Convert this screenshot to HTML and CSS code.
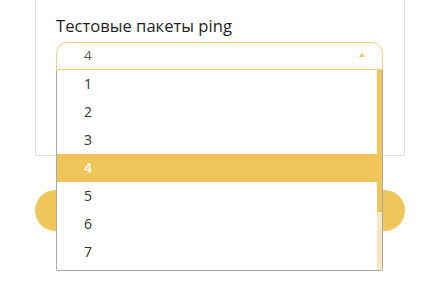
FILE: index.html
```html
<!DOCTYPE html>
<html lang="ru">
<head>
<meta charset="utf-8">
<title>Тестовые пакеты ping</title>
<link rel="stylesheet" href="styles.css">
</head>
<body>
<div class="page">
  <div class="card">
    <div class="label">Тестовые пакеты ping</div>
    <div class="select">
      <div class="select-head">
        <span class="value">4</span>
        <span class="arrow"></span>
      </div>
      <div class="options">
        <ul class="list">
          <li>1</li>
          <li>2</li>
          <li>3</li>
          <li class="active">4</li>
          <li>5</li>
          <li>6</li>
          <li>7</li>
        </ul>
        <div class="scrollbar">
          <div class="thumb"></div>
          <div class="track"></div>
        </div>
      </div>
    </div>
  </div>
  <div class="btn"></div>
</div>
</body>
</html>
```
FILE: styles.css
```css
html, body {
  margin: 0;
  padding: 0;
  background: #fff;
  min-height: 296px;
}
body {
  font-family: "Open Sans", "Noto Sans", sans-serif;
  color: #222;
}
.page {
  padding-left: 35px;
  min-height: 296px;
}
.card {
  border: 1px solid #dedede;
  border-top: none;
  padding: 15px 0 85px 20px;
  box-sizing: border-box;
  width: 370px;
}
.label {
  font-size: 16.6px;
  line-height: 22px;
  color: #1e1e1e;
  margin-bottom: 5px;
}
.select {
  position: relative;
  width: 327px;
}
.select-head {
  height: 28px;
  box-sizing: border-box;
  border: 1px solid #efd27c;
  border-radius: 11px 11px 0 0;
  display: flex;
  align-items: center;
  justify-content: space-between;
  padding: 0 17px 0 27px;
}
.value {
  font-size: 13.5px;
  color: #555;
  line-height: 1;
}
.arrow {
  width: 0;
  height: 0;
  border-left: 3.5px solid transparent;
  border-right: 3.5px solid transparent;
  border-bottom: 4px solid #ecc45c;
  margin-top: -2px;
}
.options {
  position: absolute;
  top: 28px;
  left: 0;
  width: 327px;
  height: 201px;
  box-sizing: border-box;
  background: #fff;
  border: 1px solid #a9a9a9;
  border-top: none;
  border-radius: 0 0 2px 2px;
  overflow: hidden;
  display: flex;
  z-index: 2;
}
.list {
  flex: 1;
  margin: 0;
  padding: 0;
  list-style: none;
}
.list li {
  height: 28px;
  line-height: 28px;
  padding-left: 27px;
  font-size: 14px;
  color: #333;
}
.list li.active {
  background: #f0c55a;
  color: #fff;
  font-weight: 600;
}
.scrollbar {
  width: 5px;
  display: flex;
  flex-direction: column;
}
.thumb {
  height: 142px;
  background: #f0c55a;
}
.track {
  flex: 1;
  background: #f8e7bf;
}
.btn {
  margin-top: 34px;
  width: 370px;
  height: 41px;
  border-radius: 21px;
  background: #f0c55a;
}
```
